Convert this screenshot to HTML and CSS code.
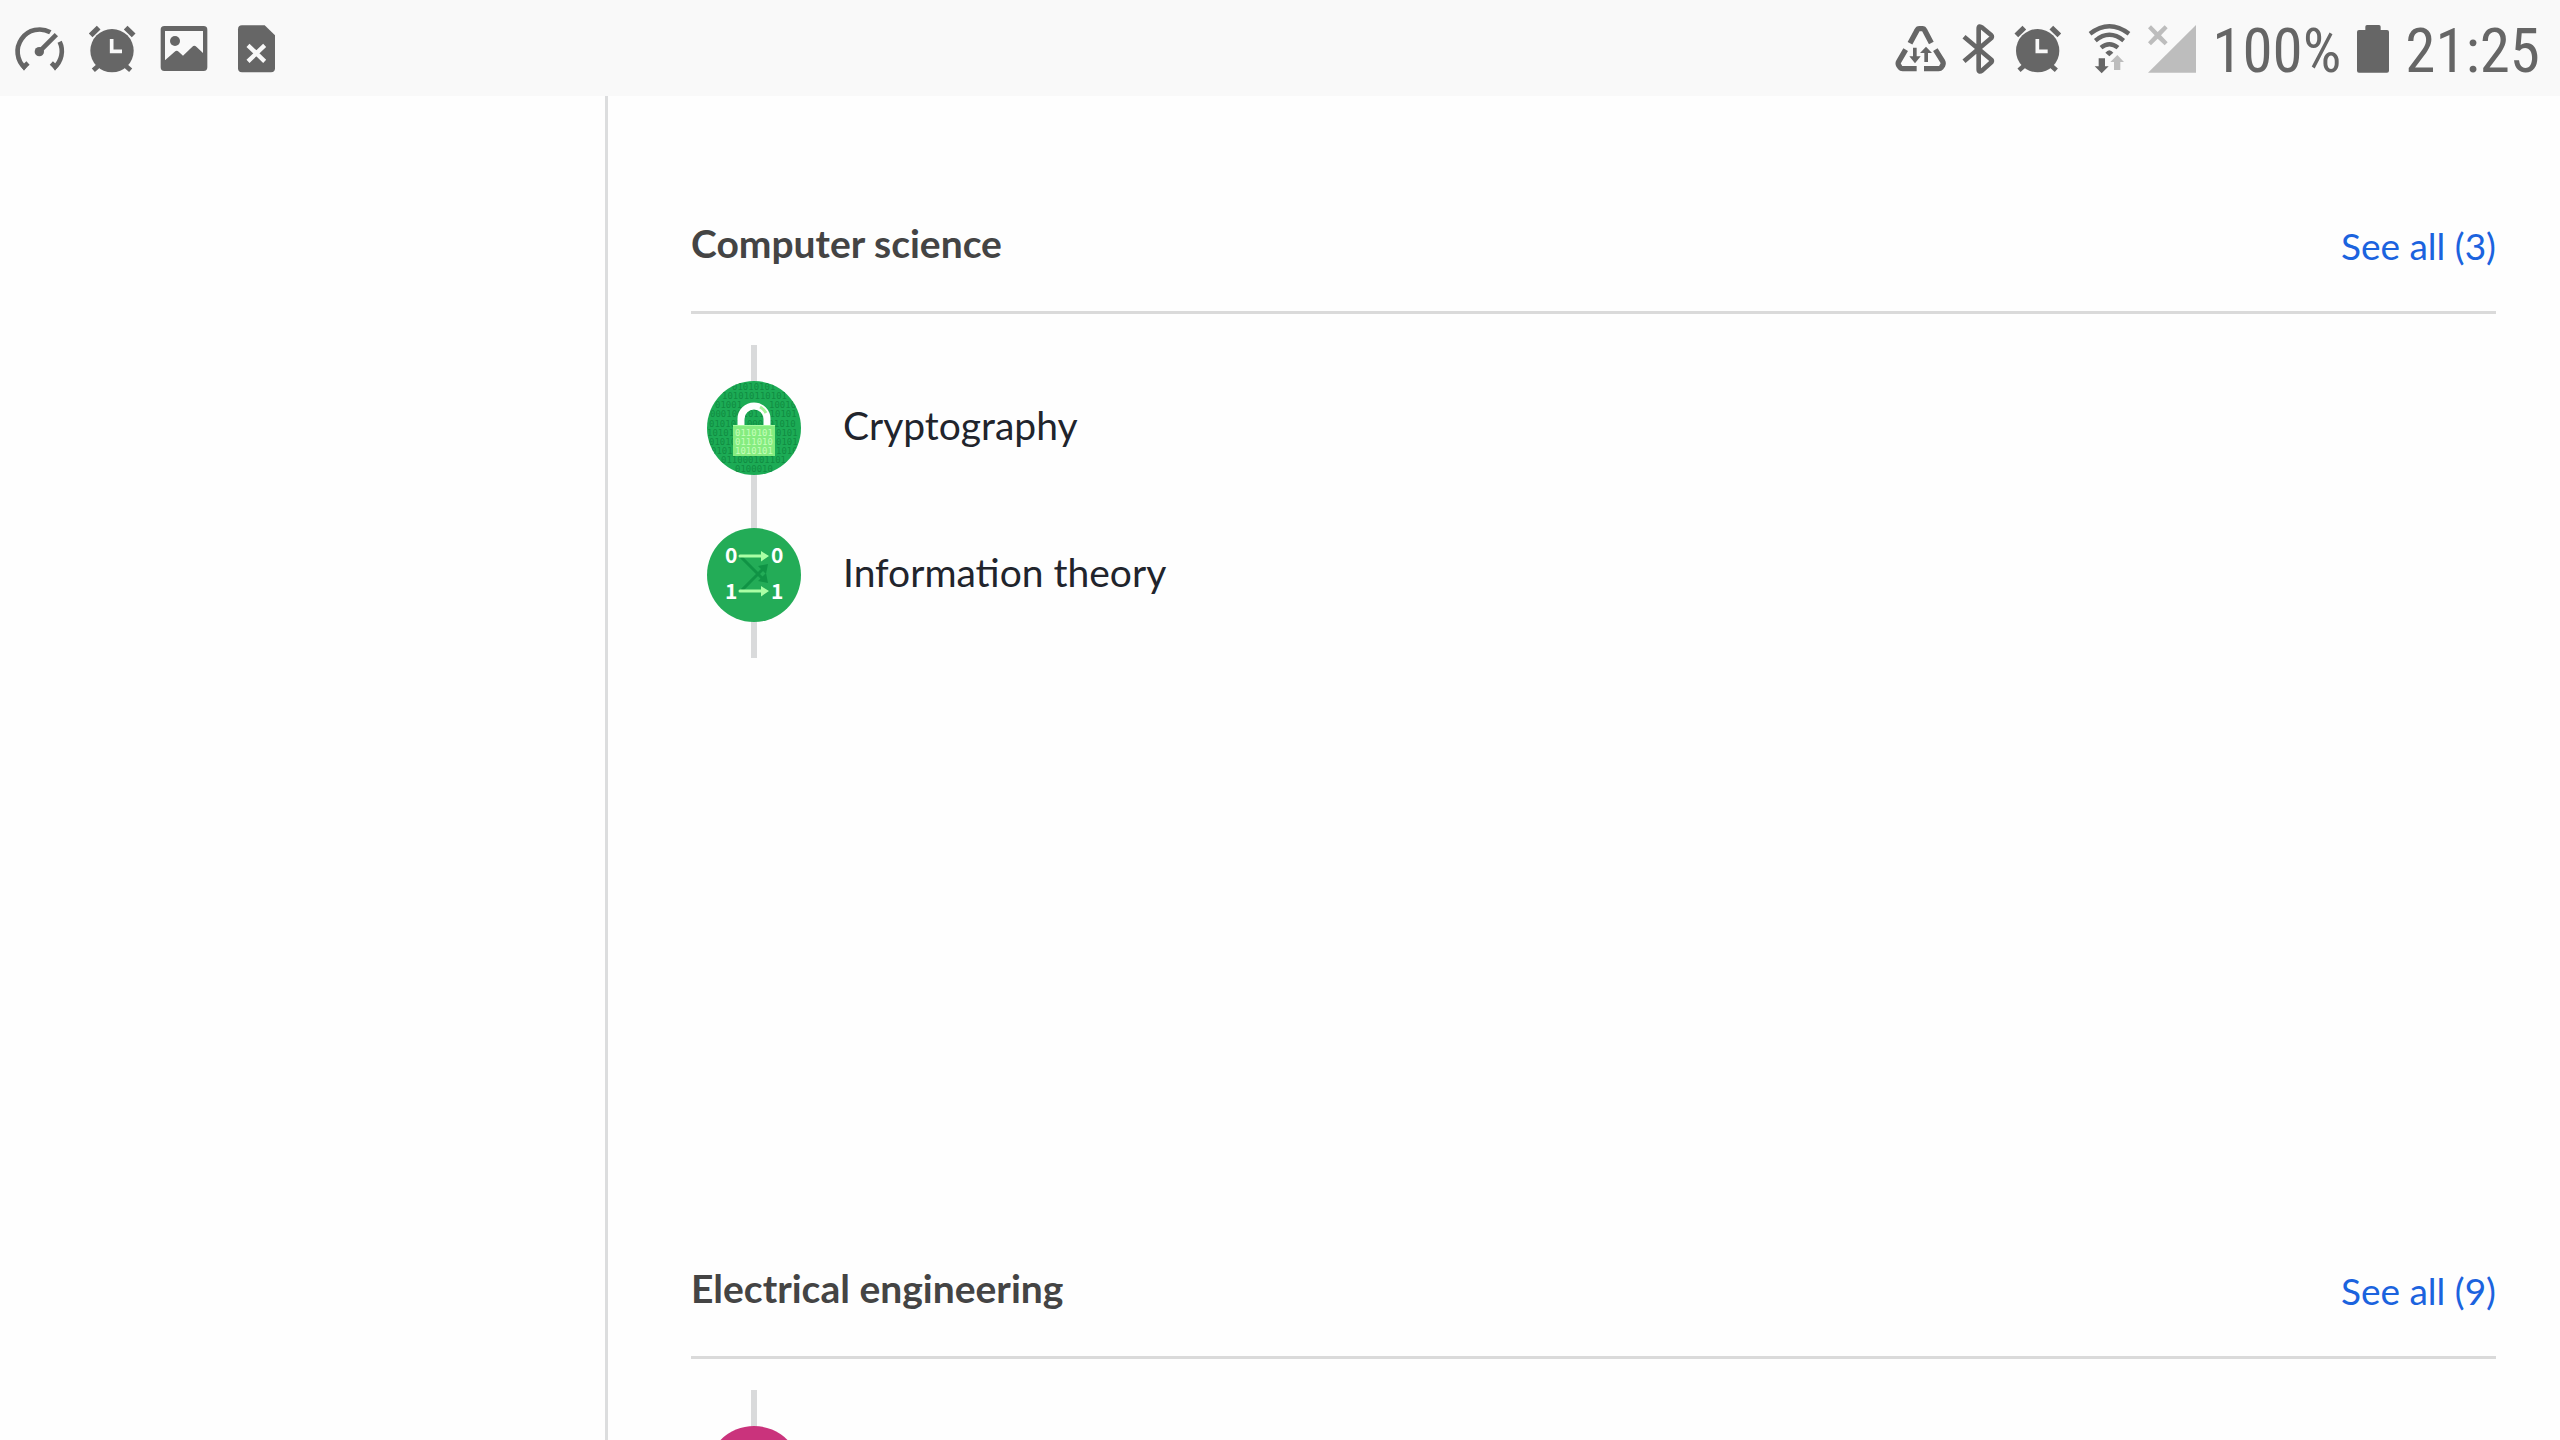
FILE: index.html
```html
<!DOCTYPE html>
<html lang="en">
<head>
<meta charset="utf-8">
<title>Computer science</title>
<link rel="stylesheet" href="styles.css">
</head>
<body>
<div class="screen">
  <header class="status">
    <div class="status-group status-left">
      <svg class="icon" viewBox="42 66 156 156" aria-hidden="true">
        <path class="line w14" d="M75 204A66 66 0 0 1 151 97M179 125A66 66 0 0 1 162 204M68 204L84 189M170 204L154 189"/>
        <path class="line w14" d="M118 155L169 104"/>
        <path d="M60 196L82 199L72 212ZM177 196L156 199L165 212Z"/>
        <circle cx="118" cy="155" r="14"/>
      </svg>
      <svg class="icon" viewBox="258 66 156 156" aria-hidden="true">
        <g id="alarm">
          <circle cx="336" cy="152" r="65"/>
          <path class="line w16" d="M272 106L296 83M401 106L377 83"/>
          <path class="line w14" d="M280 211L298 195M392 211L374 195"/>
          <path class="cut" d="M335 117V154H366"/>
        </g>
      </svg>
      <svg class="icon" viewBox="474 66 156 156" aria-hidden="true">
        <path fill-rule="evenodd" d="M493 78H611Q622 78 622 89V202Q622 213 611 213H493Q482 213 482 202V89Q482 78 493 78ZM495 93V181L524 155Q530 149 536 155L549 167L577 140Q583 134 589 140L609 159V93Z"/>
        <circle cx="525" cy="123" r="15"/>
      </svg>
      <svg class="icon" viewBox="690 66 156 156" aria-hidden="true">
        <path d="M726 76H794L825 106V205Q825 217 813 217H726Q714 217 714 205V88Q714 76 726 76Z"/>
        <path class="cut w13" d="M744 136L794 184M794 136L744 184"/>
      </svg>
    </div>
    <div class="status-group status-right">
      <svg class="icon" viewBox="39 66 156 156" aria-hidden="true">
        <path class="line w16" d="M87 130L108 91Q110 86 115 86H124Q129 86 131 91L151 129M74 149L53 185Q50 190 53 196L57 202Q60 206 65 206H107M163 149L185 184Q188 190 185 196L181 202Q178 206 173 206H129"/>
        <path d="M96 143H107V169H119L102 190L85 169H96ZM130 186V159H117L135 140L153 159H141V186Z"/>
      </svg>
      <svg class="icon icon-bluetooth" viewBox="243 66 108 156" aria-hidden="true">
        <path class="line w14 round-join" d="M249 110L331 179Q334 183 331 187L304 211Q293 219 293 208V86Q293 75 304 83L331 106Q334 110 331 114L249 184"/>
      </svg>
      <svg class="icon icon-alarm" viewBox="265 66 144 156" aria-hidden="true"><use href="#alarm"/></svg>
      <svg class="icon icon-wifi" viewBox="591 66 162 156" aria-hidden="true">
        <path class="line w13" d="M627 101Q685 56 744 101M643 122Q685 87 728 122M660 143Q685 122 711 143"/>
        <path d="M673 158Q685 143 697 158L685 169ZM653 175H672V199H683L662 220L641 199H653Z"/>
        <path class="faint" d="M699 210V186H688L709 165L729 186H718V210Z"/>
      </svg>
      <svg class="icon icon-signal faint" viewBox="801 66 144 156" aria-hidden="true">
        <path d="M945 75V218H801Z"/>
        <path d="M810 76L830 96L851 76L860 85L840 106L860 127L851 136L830 116L810 136L801 127L821 106L801 85Z"/>
      </svg>
      <span class="reading">100%</span>
      <svg class="icon icon-battery" viewBox="474 66 96 156" aria-hidden="true">
        <path d="M504 75H540Q545 75 545 80V90H564Q570 90 570 96V212Q570 218 564 218H480Q474 218 474 212V96Q474 90 480 90H499V80Q499 75 504 75Z"/>
      </svg>
      <time class="reading">21:25</time>
    </div>
  </header>

  <div class="columns">
    <aside class="sidebar"></aside>
    <main class="content">
      <section class="subject">
        <div class="subject-head">
          <h2>Computer science</h2>
          <a href="#computer-science">See all (3)</a>
        </div>
        <ul class="topics">
          <li class="topic">
            <svg class="badge" viewBox="0 0 94 94" aria-hidden="true">
              <clipPath id="disc"><circle cx="47" cy="47" r="47"/></clipPath>
              <circle class="green" cx="47" cy="47" r="47"/>
              <g class="bits" clip-path="url(#disc)">
                <text x="25" y="9">01010101</text>
                <text x="15" y="18">101010110101</text>
                <text x="8" y="27">01001</text><text x="62" y="27">10010</text>
                <text x="3" y="36">0001001011010101</text>
                <text x="2" y="46">0101011000101010</text>
                <text x="0" y="55">10101</text><text x="69" y="55">0101</text>
                <text x="2" y="64">01010</text><text x="69" y="64">0101</text>
                <text x="4" y="73">01011</text><text x="69" y="73">1010</text>
                <text x="14" y="82">011000101101</text>
                <text x="28" y="91">0100010</text>
              </g>
              <path class="shackle" d="M34 45V38A13 13 0 0 1 60 38V45"/>
              <path class="shine" d="M53 26Q57 28 59 32"/>
              <rect class="lock" x="26" y="44" width="42" height="31"/>
              <path class="lock-edge" d="M26 44.500H68"/>
              <g class="bits lock-bits">
                <text x="28" y="55">0110101</text>
                <text x="28" y="64">0111010</text>
                <text x="28" y="73">1010101</text>
              </g>
            </svg>
            <a href="#cryptography">Cryptography</a>
          </li>
          <li class="topic">
            <svg class="badge" viewBox="0 0 94 94" aria-hidden="true">
              <circle class="flat-green" cx="47" cy="47" r="47"/>
              <path class="cross" d="M34 29L56 51M35 62L56 41"/>
              <path class="cross-head" d="M61 55L51 53L59 45ZM61 36L59 46L51 38Z"/>
              <path class="arrow" d="M33 28H56M33 63H56"/>
              <path class="arrow-head" d="M54 23L62 28L54 33.500ZM54 58L62 63L54 68.500Z"/>
              <g class="channel">
                <text x="18" y="35">0</text><text x="64" y="35">0</text>
                <text x="18" y="71">1</text><text x="64" y="71">1</text>
              </g>
            </svg>
            <a href="#information-theory">Information theory</a>
          </li>
        </ul>
      </section>
      <section class="subject">
        <div class="subject-head">
          <h2>Electrical engineering</h2>
          <a href="#electrical-engineering">See all (9)</a>
        </div>
        <ul class="topics">
          <li class="topic">
            <svg class="badge" viewBox="0 0 94 94" aria-hidden="true"><circle class="pink" cx="47" cy="47" r="47"/></svg>
          </li>
        </ul>
      </section>
    </main>
  </div>
</div>
</body>
</html>
```
FILE: styles.css
```css
* { box-sizing: border-box; }

body {
  margin: 0;
  background: #fefefe;
  color: #21242c;
  font-family: Lato, "Liberation Sans", sans-serif;
  font-size: 39px;
  line-height: 48px;
}

.screen {
  display: flex;
  flex-direction: column;
  height: 100vh;
  overflow: hidden;
}

/* Status bar */
.status {
  display: flex;
  flex: none;
  align-items: center;
  justify-content: space-between;
  height: 96px;
  padding: 0 20px 0 14px;
  background: #f9f9f9;
  color: #666;
  font-family: "Roboto Condensed", Roboto, sans-serif;
  font-size: 61px;
  line-height: 72px;
}
.status-group { display: flex; align-items: center; }
.status-left { gap: 20px; }
.status-right { gap: 16px; }
.reading { padding-top: 5px; }

.icon { display: block; flex: none; width: 52px; height: 52px; fill: #666; }
.icon-bluetooth { width: 36px; }
.icon-alarm, .icon-signal { width: 48px; }
.icon-wifi { width: 54px; }
.icon-battery { width: 32px; }
.line { fill: none; stroke: #666; }
.cut { fill: none; stroke: #f9f9f9; stroke-width: 11px; }
.w13 { stroke-width: 13px; }
.w14 { stroke-width: 14px; }
.w16 { stroke-width: 16px; }
.round-join { stroke-linejoin: round; }
.faint { fill: #bdbdbd; }

/* Page */
.columns { display: flex; flex: 1; min-height: 0; }
.sidebar { flex: none; width: 608px; border-right: 3px solid #dcddde; }
.content {
  flex: 1;
  padding: 0 64px 0 83px;
  overflow: auto;
  scrollbar-width: none;
}

.subject { min-height: 1045px; padding-top: 123px; }
.subject-head {
  display: flex;
  align-items: flex-start;
  justify-content: space-between;
  padding-bottom: 41px;
  border-bottom: 3px solid #dadada;
}
.subject-head h2 {
  margin: 0;
  color: #444;
  font-size: 39px;
  font-weight: 700;
}
.subject-head a {
  padding-top: 3px;
  color: #1b63de;
  font-size: 37px;
  text-decoration: none;
}

.topics {
  margin: 31px 0 0;
  padding: 9px 16px 10px;
  list-style: none;
  background: linear-gradient(#d9dadb, #d9dadb) 60px 0 / 6px 100% no-repeat;
}
.topic { display: flex; align-items: center; gap: 42px; height: 147px; }
.topic a { padding-bottom: 5px; color: inherit; text-decoration: none; }

/* Topic badges */
.badge { display: block; flex: none; width: 94px; height: 94px; }
.green { fill: #1cab55; }
.flat-green { fill: #23ac57; }
.pink { fill: #ca337c; }
.bits {
  fill: #118c42;
  font-family: "DejaVu Sans Mono", monospace;
  font-size: 9px;
}
.lock-bits { fill: #c4ffba; }
.shackle { fill: none; stroke: #fff; stroke-width: 7px; }
.shine { fill: none; stroke: #a5f59a; stroke-width: 3px; }
.lock { fill: #85ec80; }
.lock-edge { fill: none; stroke: #a9fba0; stroke-width: 1px; }
.cross { fill: none; stroke: #109345; stroke-width: 3px; }
.cross-head { fill: #109345; }
.arrow { fill: none; stroke: #aaffa5; stroke-width: 3px; stroke-linecap: round; }
.arrow-head { fill: #aaffa5; }
.channel {
  fill: #fff;
  font-family: "Noto Sans CJK SC", sans-serif;
  font-size: 21px;
  font-weight: 700;
}
```
